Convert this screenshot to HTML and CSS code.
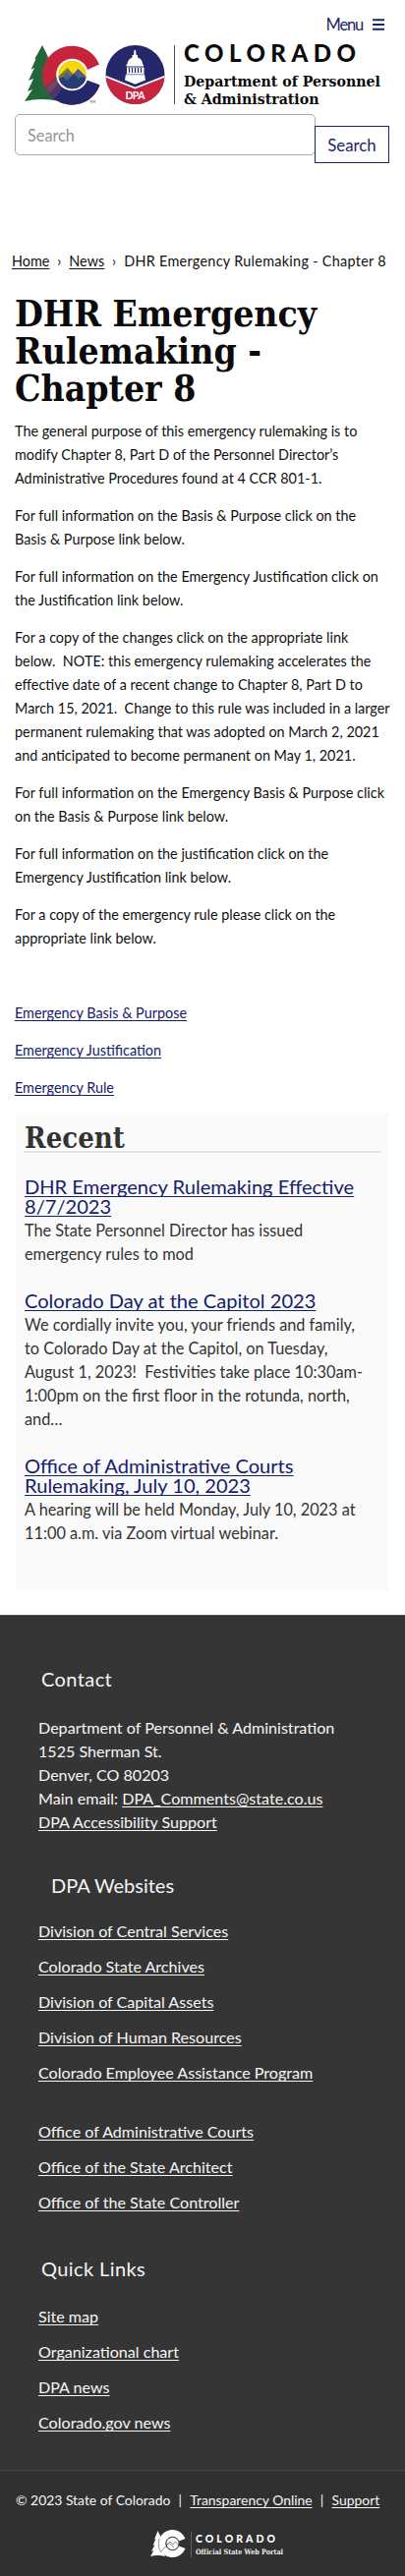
FILE: index.html
```html
<!DOCTYPE html>
<html lang="en">
<head>
<meta charset="utf-8">
<title>DHR Emergency Rulemaking - Chapter 8</title>
<link rel="stylesheet" href="styles.css">
</head>
<body>
<header class="header">
  <div class="menu"><span>Menu</span>
    <svg width="12" height="12" viewBox="0 0 12 12"><path d="M0 1.2h12M0 6h12M0 10.8h12" stroke="#1d2368" stroke-width="2"/></svg>
  </div>
  <svg class="logo" width="412" height="68" viewBox="0 42 412 68">
    <defs>
      <clipPath id="ring"><path d="M101 65.5A30 30 0 1 0 101.500 86.500L88 81.500A15 15 0 1 1 88 71.500Z"/></clipPath>
      <clipPath id="disc"><circle cx="73.500" cy="76" r="14.300"/></clipPath>
      <clipPath id="seal"><circle cx="137.500" cy="76" r="30"/></clipPath>
    </defs>
    <path d="M43 46L50 60L47.500 59.500L54 71L58 96L60 103Q42 99 25 103L33 91L28 93L34 80L29 82L35 69L31.500 71L36.500 60L35 60.500Z" fill="#22663a"/>
    <g clip-path="url(#ring)">
      <rect x="42" y="44" width="62" height="64" fill="#c5243a"/>
      <path d="M41 94L53 83L59 77L64 84L88 81L106 87V108H42Z" fill="#24286b"/>
      <path d="M42 94L53 83L58 79L61 84L49 97Z" fill="#724466"/>
      <path d="M48 98L61 83L65 88L54 102Z" fill="#4b376d"/>
    </g>
    <circle cx="73.500" cy="76" r="16.300" fill="#fff"/>
    <g clip-path="url(#disc)">
      <rect x="58" y="60" width="32" height="32" fill="#f8d60c"/>
      <path d="M57 80L68.500 69L75 76L79.500 70L92 84V93H57Z" fill="#777a35"/>
      <path d="M63 79L68.500 74L72 78L79.500 70L92 82V93H57Z" fill="#47608d"/>
      <path d="M57 82L64 78L68 82L75 75L80 80L84 78L92 84V93H57Z" fill="#263c73"/>
    </g>
    <text class="tm" x="91" y="105">TM</text>
    <g clip-path="url(#seal)">
      <rect x="107" y="46" width="61" height="61" fill="#24286b"/>
      <path d="M107 78.500L137.500 90.500L168 78.500V107H107Z" fill="#c9243f"/>
      <path d="M107 77.500L137.500 89.500L168 77.500" fill="none" stroke="#fff" stroke-width="1.800"/>
    </g>
    <path d="M136.500 51h1.600l.4 5h1.500v2.500c4 1.500 5 4 5 7h1v2h-17.500v-2h1c0-3 1.500-5.500 5-7V56h1.500z" fill="#fff"/>
    <path d="M129 68.500h17.500v7H147l1 6-10.500 4.200L127 81.500l1-6h1z" fill="#fff"/>
    <path d="M131.500 69v5M134.500 69v5M137.500 69v5M140.500 69v5M143.500 69v5" stroke="#24286b" stroke-width="1.200"/>
    <path d="M128.500 75.800h18" stroke="#24286b" stroke-width=".6"/>
    <text class="seal-text" x="127.500" y="100.500" textLength="20">DPA</text>
    <path d="M177.500 46V106" stroke="#4b4b4f" stroke-width="1"/>
    <text class="brand" x="187" y="63" textLength="175">COLORADO</text>
    <text class="dept" x="187" y="87.500" textLength="200" lengthAdjust="spacingAndGlyphs">Department of Personnel</text>
    <text class="dept" x="187" y="105.500" textLength="137.500" lengthAdjust="spacingAndGlyphs">&amp; Administration</text>
  </svg>
  <form class="search"><input class="field" type="text" placeholder="Search"><button class="go" type="button">Search</button></form>
</header>
<nav class="crumbs"><a href="#">Home</a><span class="sep">›</span><a href="#">News</a><span class="sep">›</span><span class="here">DHR Emergency Rulemaking - Chapter 8</span></nav>
<main class="article">
  <h1>DHR Emergency<br>Rulemaking -<br>Chapter 8</h1>
  <p>The general purpose of this emergency rulemaking is to<br>modify Chapter 8, Part D of the Personnel Director’s<br>Administrative Procedures found at 4 CCR 801-1.</p>
  <p>For full information on the Basis &amp; Purpose click on the<br>Basis &amp; Purpose link below.</p>
  <p>For full information on the Emergency Justification click on<br>the Justification link below.</p>
  <p>For a copy of the changes click on the appropriate link<br>below.&nbsp; NOTE: this emergency rulemaking accelerates the<br>effective date of a recent change to Chapter 8, Part D to<br>March 15, 2021.&nbsp; Change to this rule was included in a larger<br>permanent rulemaking that was adopted on March 2, 2021<br>and anticipated to become permanent on May 1, 2021.</p>
  <p>For full information on the Emergency Basis &amp; Purpose click<br>on the Basis &amp; Purpose link below.</p>
  <p>For full information on the justification click on the<br>Emergency Justification link below.</p>
  <p>For a copy of the emergency rule please click on the<br>appropriate link below.</p>
  <p>&nbsp;</p>
  <p><a href="#">Emergency Basis &amp; Purpose</a></p>
  <p><a href="#">Emergency Justification</a></p>
  <p><a href="#">Emergency Rule</a></p>
</main>
<aside class="recent">
  <h2>Recent</h2>
  <section><h3><a href="#">DHR Emergency Rulemaking Effective<br>8/7/2023</a></h3>
  <p>The State Personnel Director has issued<br>emergency rules to mod</p></section>
  <section><h3><a href="#">Colorado Day at the Capitol 2023</a></h3>
  <p>We cordially invite you, your friends and family,<br>to Colorado Day at the Capitol, on Tuesday,<br>August 1, 2023!&nbsp; Festivities take place 10:30am-<br>1:00pm on the first floor in the rotunda, north,<br>and…</p></section>
  <section><h3><a href="#">Office of Administrative Courts<br>Rulemaking, July 10, 2023</a></h3>
  <p>A hearing will be held Monday, July 10, 2023 at<br>11:00 a.m. via Zoom virtual webinar.</p></section>
</aside>
<footer class="footer">
  <section class="contact"><h4>Contact</h4>
  <p>Department of Personnel &amp; Administration<br>1525 Sherman St.<br>Denver, CO 80203<br>Main email: <a href="#">DPA_Comments@state.co.us</a><br><a href="#">DPA Accessibility Support</a></p></section>
  <section class="sites"><h4>DPA Websites</h4>
  <ul><li><a href="#">Division of Central Services</a></li><li><a href="#">Colorado State Archives</a></li><li><a href="#">Division of Capital Assets</a></li><li><a href="#">Division of Human Resources</a></li><li><a href="#">Colorado Employee Assistance Program</a></li></ul>
  <ul><li><a href="#">Office of Administrative Courts</a></li><li><a href="#">Office of the State Architect</a></li><li><a href="#">Office of the State Controller</a></li></ul></section>
  <section class="quick"><h4>Quick Links</h4>
  <ul><li><a href="#">Site map</a></li><li><a href="#">Organizational chart</a></li><li><a href="#">DPA news</a></li><li><a href="#">Colorado.gov news</a></li></ul></section>
  <div class="legal">
    <div class="legal-row"><span>© 2023 State of Colorado</span><span class="bar">|</span><a href="#">Transparency Online</a><span class="bar">|</span><a href="#">Support</a></div>
    <svg class="portal" width="140" height="32" viewBox="150 2572 140 32">
      <path d="M160.500 2575L164 2582L163 2590L168 2601Q160 2599 153 2601L156.500 2595L154 2596L157.500 2589L155.500 2590L158.500 2583L157 2584Z" fill="#fff"/>
      <path d="M188.500 2583A14 14 0 1 0 188.500 2593L182 2590.500A7 7 0 1 1 182 2585.500Z" fill="#fff"/>
      <circle cx="175.500" cy="2588" r="6.200" fill="#fff"/>
      <circle cx="175.500" cy="2588" r="6.800" fill="none" stroke="#444" stroke-width=".7"/>
      <path d="M162 2583Q160 2592 164 2597M164 2596L173 2586L176 2589L178.500 2586L182 2590M169 2590L172 2587.500L177 2592" fill="none" stroke="#444" stroke-width=".6"/>
      <path d="M194.500 2576V2602" stroke="#777" stroke-width=".7"/>
      <text class="portal-brand" x="199" y="2586.500" textLength="81">COLORADO</text>
      <text class="portal-sub" x="199" y="2599" textLength="89" lengthAdjust="spacingAndGlyphs">Official State Web Portal</text>
    </svg>
  </div>
</footer>
</body>
</html>
```
FILE: styles.css
```css
* { box-sizing: border-box; }
body { margin: 0; background: #fff; color: #111; font-family: Lato, "Open Sans", sans-serif; font-size: 14.4px; line-height: 24px; white-space: nowrap; overflow-x: hidden; }
h1, h2, h3, h4, p, ul { margin: 0; padding: 0; }
ul { list-style: none; }
a { color: #14206c; text-decoration: underline; text-decoration-thickness: 1px; text-underline-offset: 2px; text-decoration-skip-ink: none; }
svg { display: block; }

.header { height: 254px; padding-top: 13px; }
.menu { display: flex; justify-content: flex-end; align-items: center; gap: 10px; height: 24px; padding-right: 21px; color: #1d2368; font-size: 16.5px; letter-spacing: -1.2px; }
.logo { margin-top: 5px; }
.tm { font: 4px Lato, sans-serif; fill: #333; }
.seal-text { font: bold 10.5px Lato, sans-serif; fill: #fff; }
.brand { font: 900 24px Lato, sans-serif; fill: #0b0b0b; }
.dept { font: bold 15.5px "DejaVu Serif Condensed", "DejaVu Serif", serif; fill: #0b0b0b; }
.search { display: flex; align-items: flex-start; margin: 6px 0 0 15px; }
.field { width: 306px; height: 42px; border: 1px solid #aaa; border-radius: 5px; padding: 0 12px; font: 16.3px Lato, sans-serif; color: #333; background: #fff; }
.field::placeholder { color: #969696; opacity: 1; }
.go { width: 76px; height: 38px; margin: 12px 0 0 -1px; padding: 0; border: 1px solid #1d2368; border-radius: 0; background: #fff; color: #1d2368; font: 16.8px Lato, sans-serif; }

.crumbs { display: flex; padding-left: 12px; height: 45px; }
.crumbs a { color: #111; }
.sep { width: 20px; text-align: center; }
.here { letter-spacing: .3px; }

.article { padding-left: 15px; }
.article h1 { font: bold 37px/38px "DejaVu Serif Condensed", "DejaVu Serif", serif; color: #0b0b0b; margin-bottom: 14px; padding-top: 1px; height: 114px; }
.article p { margin-bottom: 14px; }

.recent { width: 379px; height: 486px; margin-left: 16px; padding: 12px 7px 0 8px; background: #fafafa; color: #333; font-size: 16.3px; }
.recent h2 { height: 28px; padding-left: 1px; border-bottom: 2px solid #e3e3e3; font: bold 29px/26px "DejaVu Serif Condensed", "DejaVu Serif", serif; margin-bottom: 24px; }
.recent section { padding-left: 1px; margin-bottom: 25px; }
.recent h3 { font-weight: 400; font-size: 20.1px; line-height: 20px; margin-bottom: 3px; }

.footer { margin-top: 24px; border-top: 1px solid #505050; background: #353535; color: #f5f5f5; font-size: 16.1px; }
.footer a { color: #f5f5f5; }
.footer h4 { font-weight: 400; font-size: 20px; line-height: 24px; letter-spacing: .4px; padding-left: 3px; }
.footer section { padding-left: 39px; }
.contact { padding-top: 52px; }
.contact p { margin-top: 26px; }
.sites { padding-top: 40px; }
.sites h4 { padding-left: 13px; letter-spacing: 0; }
.sites h4 + ul { margin-top: 17px; }
.footer li { height: 36px; line-height: 36px; }
.sites ul + ul { margin-top: 24px; }
.quick { padding-top: 37px; }
.quick ul { margin-top: 19px; }
.legal { height: 108px; margin-top: 30px; border-top: 1px solid #444; background: #303030; font-size: 13.9px; }
.legal-row { display: flex; padding: 18px 0 0 16px; }
.bar { width: 20px; text-align: center; }
.portal { margin: 16px 0 0 150px; }
.portal-brand { font: 900 10.5px Lato, sans-serif; fill: #fff; }
.portal-sub { font: bold 7.4px "DejaVu Serif Condensed", serif; fill: #eee; }
```
